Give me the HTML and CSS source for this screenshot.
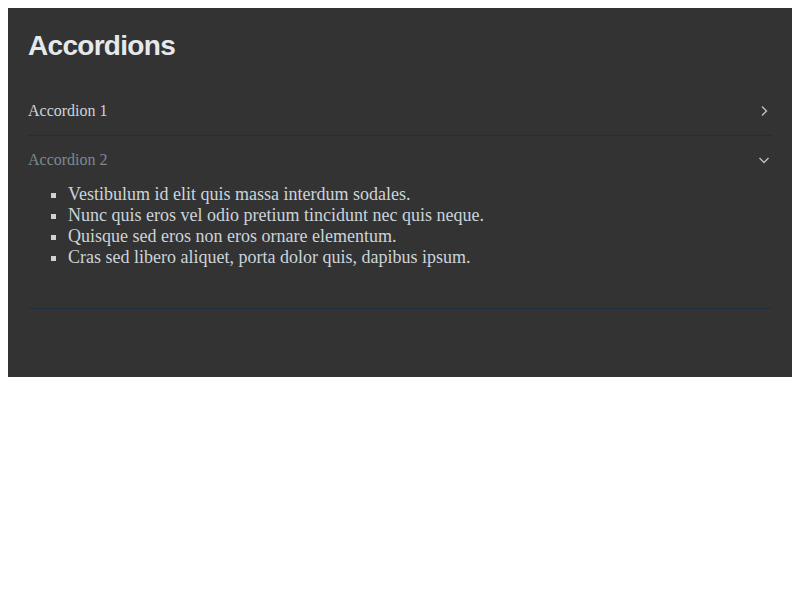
FILE: index.html
```html
<!DOCTYPE html>
<html>
<head>
<meta charset="utf-8">
<link rel="stylesheet" href="styles.css">
</head>
<body>
<div class="panel">
  <h1 class="title">Accordions</h1>
  <div class="accordion">
    <div class="acc-item">
      <div class="acc-header">
        <span class="acc-label">Accordion 1</span>
        <svg class="chev" width="12" height="12" viewBox="0 0 12 12"><path d="M4 1.5 L8.5 6 L4 10.5" fill="none" stroke="currentColor" stroke-width="1.4"/></svg>
      </div>
    </div>
    <div class="acc-item open">
      <div class="acc-header">
        <span class="acc-label">Accordion 2</span>
        <svg class="chev" width="12" height="12" viewBox="0 0 12 12"><path d="M1.5 4 L6 8.5 L10.5 4" fill="none" stroke="currentColor" stroke-width="1.4"/></svg>
      </div>
      <ul class="acc-body">
        <li>Vestibulum id elit quis massa interdum sodales.</li>
        <li>Nunc quis eros vel odio pretium tincidunt nec quis neque.</li>
        <li>Quisque sed eros non eros ornare elementum.</li>
        <li>Cras sed libero aliquet, porta dolor quis, dapibus ipsum.</li>
      </ul>
    </div>
  </div>
</div>
</body>
</html>
```

FILE: styles.css
```css
body {
  margin: 8px;
  background: #ffffff;
  font-family: "Liberation Serif", serif;
}
.panel {
  background: #333333;
  padding: 20px 20px 68px;
}
.title {
  margin: 0 0 23px;
  font-family: "Liberation Sans", Arial, sans-serif;
  font-size: 28px;
  line-height: 36px;
  font-weight: bold;
  letter-spacing: -0.7px;
  color: #e6e9ec;
}
.acc-item {
  border-bottom: 1px solid #262e34;
}
.acc-item.open {
  border-bottom-color: #203040;
}
.acc-header {
  display: flex;
  align-items: center;
  justify-content: space-between;
  padding: 14px 0 15px;
  font-size: 16px;
  line-height: 19px;
  color: #cdd4da;
}
.open .acc-header {
  color: #7c8a94;
}
.chev {
  color: #b8c0c7;
  margin-right: 2px;
}
.acc-body {
  margin: 0;
  padding: 0 0 40px 40px;
  list-style: square;
  font-size: 18px;
  line-height: 21px;
  color: #ccd4da;
}
```
